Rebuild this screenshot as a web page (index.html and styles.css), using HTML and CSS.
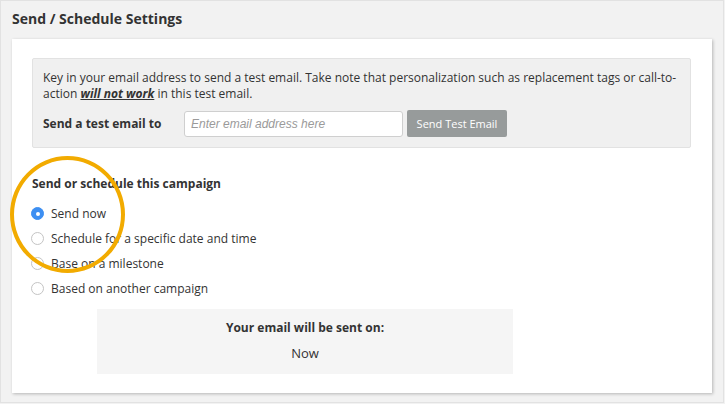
FILE: index.html
```html
<!DOCTYPE html>
<html>
<head>
<meta charset="utf-8">
<link rel="stylesheet" href="styles.css">
</head>
<body>
<div class="page">
  <h1 class="title">Send / Schedule Settings</h1>
  <div class="card">
    <div class="test-box">
      <p class="note">Key in your email address to send a test email. Take note that personalization such as replacement tags or call-to-action <b class="warn">will not work</b> in this test email.</p>
      <div class="test-row">
        <label class="test-label">Send a test email to</label>
        <input class="email-input" type="text" placeholder="Enter email address here">
        <button class="test-btn">Send Test Email</button>
      </div>
    </div>
    <div class="schedule">
      <h2 class="sched-title">Send or schedule this campaign</h2>
      <ul class="options">
        <li class="option"><span class="radio checked"></span>Send now</li>
        <li class="option"><span class="radio"></span>Schedule for a specific date and time</li>
        <li class="option"><span class="radio"></span>Base on a milestone</li>
        <li class="option"><span class="radio"></span>Based on another campaign</li>
      </ul>
      <div class="highlight"></div>
    </div>
    <div class="sent-on">
      <div class="sent-title">Your email will be sent on:</div>
      <div class="sent-value">Now</div>
    </div>
  </div>
</div>
</body>
</html>
```
FILE: styles.css
```css
* { box-sizing: border-box; }
html, body { margin: 0; padding: 0; background: #f2f2f2; }
body { font-family: "Open Sans", "Liberation Sans", sans-serif; color: #333; font-size: 12px; }
.page {
  width: 724px; height: 403px;
  border: 1px solid #e2e2e2;
  background: #f2f2f2;
  position: relative;
}
.title {
  margin: 0; padding: 8px 0 0 11px;
  font-size: 14px; font-weight: 700; line-height: 20px; height: 38px;
  color: #333;
}
.card {
  margin-left: 11px;
  width: 700px; height: 354px;
  background: #fff;
  box-shadow: 1px 1px 3px rgba(0,0,0,0.25);
  padding: 19px 21px 0 20px;
}
.test-box {
  background: #f0f0f0;
  border: 1px solid #e2e2e2;
  border-radius: 2px;
  padding: 11px 10px 10px 10px;
}
.note { margin: 0; line-height: 16px; font-size: 12px; }
.warn { font-style: italic; text-decoration: underline; }
.test-row { display: flex; align-items: center; margin-top: 8px; }
.test-label { width: 141px; font-weight: 700; font-size: 12px; }
.email-input {
  width: 219px; height: 26px;
  border: 1px solid #cfcfcf; border-radius: 3px;
  padding: 0 6px;
  font-family: "Liberation Sans", sans-serif; font-size: 12px; font-style: italic;
  background: #fff; outline: none;
}
.email-input::placeholder { color: #9a9a9a; }
.test-btn {
  margin-left: 4px; width: 100px; height: 27px;
  background: #979b9b; color: #fff; border: none; border-radius: 2px;
  font-family: "Open Sans", sans-serif; font-size: 11px;
}
.schedule { position: relative; padding-top: 27px; }
.sched-title { margin: 0; font-size: 12px; font-weight: 700; line-height: 18px; }
.options { list-style: none; margin: 8px 0 0 0; padding: 0; }
.option { display: flex; align-items: center; height: 25px; font-size: 12px; }
.radio {
  width: 13px; height: 13px; border-radius: 50%;
  border: 1px solid #c4c4c4; background: #fff;
  margin: 0 7px 0 -1px; flex: none;
}
.radio.checked {
  background: #3d8ff2; border-color: #3d8ff2;
  display: flex; align-items: center; justify-content: center;
}
.radio.checked::after { content: ""; width: 4px; height: 4px; border-radius: 50%; background: #fff; }
.highlight {
  position: absolute; left: -22px; top: 8px;
  width: 115px; height: 117px;
  border: 4px solid #f2ab00; border-radius: 50%;
}
.sent-on {
  margin: 8px 0 0 65px;
  width: 416px; height: 65px;
  background: #f5f5f5;
  text-align: center;
  padding-top: 10px;
}
.sent-title { font-weight: 700; font-size: 12px; line-height: 18px; }
.sent-value { font-size: 13px; line-height: 18px; margin-top: 7px; }
```
